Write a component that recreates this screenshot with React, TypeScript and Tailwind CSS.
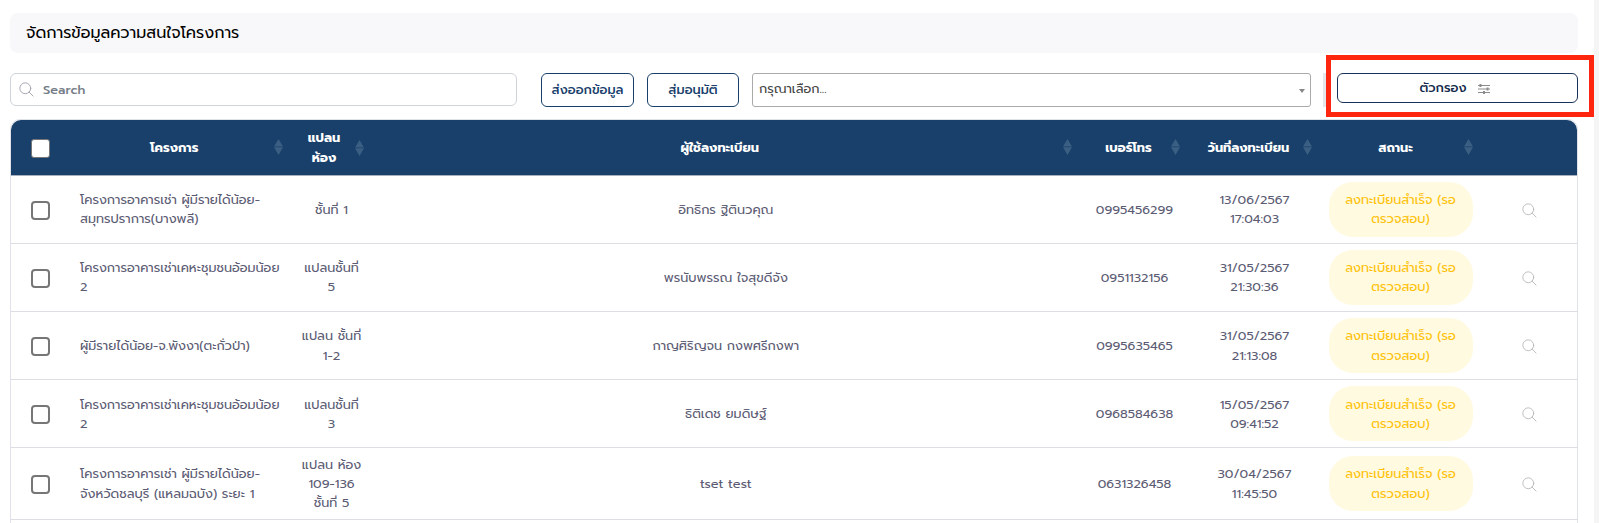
import type { ReactNode } from "react";

type Row = {
  project: string[];
  unit: string[];
  name: string;
  phone: string;
  date: string;
  time: string;
  style: string;
  lift: string;
};

const rows: Row[] = [
  { project: ["โครงการอาคารเช่า ผู้มีรายได้น้อย-", "สมุทรปราการ(บางพลี)"], unit: ["ชั้นที่ 1"], name: "อิทธิกร ฐิตินวคุณ", phone: "0995456299", date: "13/06/2567", time: "17:04:03", style: "h-[68px] leading-[19px] border-[#a7b0bd]", lift: "pb-0.5" },
  { project: ["โครงการอาคารเช่าเคหะชุมชนอ้อมน้อย", "2"], unit: ["แปลนชั้นที่", "5"], name: "พรนับพรรณ ใจสุขดีจัง", phone: "0951132156", date: "31/05/2567", time: "21:30:36", style: "h-[68px] leading-[19px] border-[#dcdee3]", lift: "pb-0.5" },
  { project: ["ผู้มีรายได้น้อย-จ.พังงา(ตะกั่วป่า)"], unit: ["แปลน ชั้นที่", "1-2"], name: "กาญศิริญจน กงพศรีกงพา", phone: "0995635465", date: "31/05/2567", time: "21:13:08", style: "h-[68px] border-[#dcdee3]", lift: "pb-0" },
  { project: ["โครงการอาคารเช่าเคหะชุมชนอ้อมน้อย", "2"], unit: ["แปลนชั้นที่", "3"], name: "ธิติเดช ยมดิษฐ์", phone: "0968584638", date: "15/05/2567", time: "09:41:52", style: "h-[68px] leading-[19px] border-[#dcdee3]", lift: "pb-0" },
  { project: ["โครงการอาคารเช่า ผู้มีรายได้น้อย-", "จังหวัดชลบุรี (แหลมฉบัง) ระยะ 1"], unit: ["แปลน ห้อง", "109-136", "ชั้นที่ 5"], name: "tset test", phone: "0631326458", date: "30/04/2567", time: "11:45:50", style: "h-[72px] border-[#dcdee3]", lift: "pb-0" },
];

const columns = "grid grid-cols-[58px_221.5px_82px_706.5px_111px_129px_163px_1fr] items-center";

function Lines({ items }: { items: string[] }) {
  return (
    <>
      {items.map((line) => (
        <span key={line} className="block whitespace-nowrap">{line}</span>
      ))}
    </>
  );
}

function SearchIcon({ className }: { className: string }) {
  return (
    <svg viewBox="0 0 16 16" className={className} fill="none" stroke="currentColor" strokeLinecap="round">
      <circle cx="6.7" cy="6.7" r="5.8" />
      <path d="M10.8 10.8 15 15" />
    </svg>
  );
}

function SortIcon() {
  return (
    <svg viewBox="0 0 9 16" className="h-4 w-[9px] shrink-0 text-[#3a5f83]" fill="currentColor">
      <path d="M4.5 0 9 7.6H0ZM0 8.2H9L4.5 16Z" />
    </svg>
  );
}

function Head({ children, pad }: { children: ReactNode; pad: string }) {
  return (
    <div className={`flex items-center ${pad}`}>
      <div className="flex-1 text-center">{children}</div>
      <SortIcon />
    </div>
  );
}

function Checkbox({ className }: { className: string }) {
  return <span role="checkbox" aria-checked="false" className={`block size-[19px] bg-white ${className}`} />;
}

export default function App() {
  return (
    <div className="flex h-[523px] overflow-hidden bg-white font-['Prompt','Noto_Sans',sans-serif]">
      <main className="w-[1594px] shrink-0 pt-[13px] pr-4 pl-2.5">
        <h1 className="flex h-10 items-center rounded-lg bg-[#f8f8fb] pl-4 text-base leading-6 text-black">
          จัดการข้อมูลความสนใจโครงการ
        </h1>

        <div className="mt-5 flex h-[35px] items-start text-[13px]">
          <div className="flex h-[33px] w-[507px] items-center rounded-md border border-[#ced4da] pl-2">
            <SearchIcon className="size-[15px] text-[#a0a2ae]" />
            <span className="ml-[9px] text-[12.8px] font-medium text-[#757d87]">Search</span>
          </div>
          <button className="ml-6 h-[34px] w-[93px] rounded-md border border-[#18406b] text-[12.8px] font-medium whitespace-nowrap text-[#18406b]">
            ส่งออกข้อมูล
          </button>
          <button className="ml-[13px] h-[34px] w-[92px] rounded-md border border-[#18406b] text-[12.8px] font-medium whitespace-nowrap text-[#18406b]">
            สุ่มอนุมัติ
          </button>
          <div className="ml-[13px] flex h-[34px] w-[559px] items-center justify-between rounded-[3px] border border-[#aaa] pr-[5px] pl-1.5">
            <span className="pb-[3px] text-[12.8px] text-[#444]">กรุณาเลือก...</span>
            <svg viewBox="0 0 6 4" className="mt-0.5 h-1 w-1.5" fill="#888">
              <path d="M0 0H6L3 4Z" />
            </svg>
          </div>
          <div className="ml-3 h-[34px] w-[3px] bg-[#e5e6ea]" />
          <div className="-mt-[18px] -mr-4 flex h-[62px] w-[268px] shrink-0 border-[5px] border-[#ff2610] pt-[13px] pr-[11px] pl-[6px]">
            <button className="flex h-[30px] w-full items-center justify-center gap-[11px] rounded-md border border-[#18335a] pr-[6px] text-[12.8px] font-medium text-[#12294a]">
              <span>ตัวกรอง</span>
              <svg viewBox="0 0 12 10" className="mt-[2px] h-2.5 w-3" fill="none" stroke="#8c8c8c">
                <path d="M0 1.5H12M0 5H12M0 8.5H12" />
                <path d="M2.5 0V3M9.5 3.5V6.5M6 7V10" strokeWidth="2" />
              </svg>
            </button>
          </div>
        </div>

        <div className="mt-[11px] rounded-t-[10px] border border-[#dfe2e8] text-[12.8px] leading-[19.2px]">
          <div className={`${columns} h-[55px] rounded-t-[10px] bg-[#18406b] font-bold text-white`}>
            <Checkbox className="mt-0.5 ml-5 rounded-[3px] border border-[#767676]" />
            <Head pad="pl-[6px] pr-[8px]">โครงการ</Head>
            <Head pad="pl-[3px] pr-[9px]"><Lines items={["แปลน", "ห้อง"]} /></Head>
            <Head pad="pl-[4px] pr-[7px]">ผู้ใช้ลงทะเบียน</Head>
            <Head pad="pl-[7px] pr-[10px]">เบอร์โทร</Head>
            <Head pad="pl-[4px] pr-[7px]">วันที่ลงทะเบียน</Head>
            <Head pad="pl-[8px] pr-[9px]">สถานะ</Head>
            <span />
          </div>
          {rows.map((row) => (
            <div key={row.phone} className={`${columns} ${row.style} border-t text-center text-[#5b5b73]`}>
              <Checkbox className="mt-0.5 ml-5 rounded-[4px] border-2 border-[#767676]" />
              <div className={`pl-[11px] text-left ${row.lift}`}><Lines items={row.project} /></div>
              <div className={row.unit.length > 1 ? row.lift : "pb-0"}><Lines items={row.unit} /></div>
              <div>{row.name}</div>
              <div>{row.phone}</div>
              <div className={row.lift}><Lines items={[row.date, row.time]} /></div>
              <div className={`mx-auto flex h-[55px] w-[144px] flex-col justify-center rounded-[24px] bg-[#fffae0] text-[#ffc107] ${row.lift}`}>
                <Lines items={["ลงทะเบียนสำเร็จ (รอ", "ตรวจสอบ)"]} />
              </div>
              <SearchIcon className="mt-[1px] ml-[40px] size-[15px] text-[#bbb]" />
            </div>
          ))}
          <div className="h-5 border-t border-[#dcdee3]" />
        </div>
      </main>
      <div className="w-[5px] shrink-0 bg-[#f5f5f5]" />
    </div>
  );
}
